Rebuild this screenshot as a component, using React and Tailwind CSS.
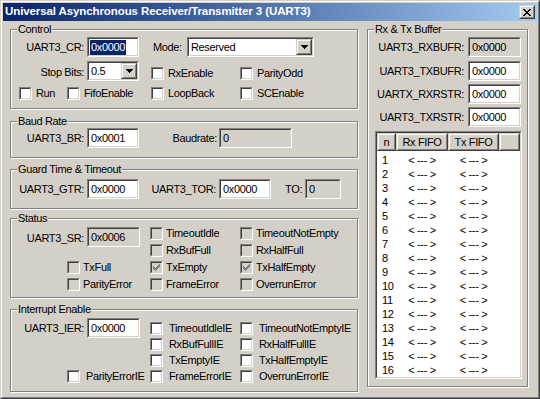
import React from 'react';

// Win2000 style bevels
function Sunken({ className = '', inner = 'bg-white', children }) {
  return (
    <div className={`border border-t-[#808080] border-l-[#808080] border-r-white border-b-white ${className}`}>
      <div className={`w-full h-full border border-t-[#404040] border-l-[#404040] border-r-[#d4d0c8] border-b-[#d4d0c8] overflow-hidden ${inner}`}>
        {children}
      </div>
    </div>
  );
}

function Raised({ className = '', children }) {
  return (
    <div className={`border border-t-[#d4d0c8] border-l-[#d4d0c8] border-r-[#404040] border-b-[#404040] ${className}`}>
      <div className="w-full h-full border border-t-white border-l-white border-r-[#808080] border-b-[#808080] bg-[#d4d0c8] flex items-center justify-center">
        {children}
      </div>
    </div>
  );
}

function Edit({ value, className, readOnly, selected }) {
  return (
    <Sunken className={className} inner={readOnly ? 'bg-[#d4d0c8]' : 'bg-white'}>
      <div className="h-full flex items-center pl-[1px] leading-none">
        {selected ? <span className="bg-[#0a246a] text-white px-[1px] py-[2px]">{value}</span> : <span className="px-[1px]">{value}</span>}
      </div>
    </Sunken>
  );
}

function Arrow() {
  return (
    <svg width="7" height="4" viewBox="0 0 7 4" shapeRendering="crispEdges">
      <rect x="0" y="0" width="7" height="1" fill="#000" />
      <rect x="1" y="1" width="5" height="1" fill="#000" />
      <rect x="2" y="2" width="3" height="1" fill="#000" />
      <rect x="3" y="3" width="1" height="1" fill="#000" />
    </svg>
  );
}

function Combo({ value, className }) {
  return (
    <Sunken className={className}>
      <div className="h-full flex items-center">
        <span className="flex-1 pl-[2px]">{value}</span>
        <Raised className="w-[16px] h-[16px]"><Arrow /></Raised>
      </div>
    </Sunken>
  );
}

function Tick() {
  const rows = [[6, 1], [5, 2], [0, 1, 4, 3], [0, 2, 3, 3], [0, 5], [1, 3], [2, 1]];
  return (
    <svg width="9" height="9" viewBox="0 0 9 9" shapeRendering="crispEdges">
      {rows.map((r, y) => {
        const out = [];
        for (let i = 0; i < r.length; i += 2) {
          out.push(<rect key={i} x={r[i] + 1} y={y + 1} width={r[i + 1]} height="1" fill="#808080" />);
        }
        return out;
      })}
    </svg>
  );
}

function Check({ label, checked, disabled, gap = 'ml-[4px]' }) {
  return (
    <div className="flex items-center h-[13px]">
      <Sunken className="w-[13px] h-[13px] shrink-0" inner={disabled ? 'bg-[#d4d0c8]' : 'bg-white'}>
        {checked && <Tick />}
      </Sunken>
      <span className={`${gap} whitespace-nowrap leading-none`}>{label}</span>
    </div>
  );
}

function Group({ label, className, children }) {
  return (
    <div className={`relative border border-[#808080] shadow-[1px_1px_0_#fff,inset_1px_1px_0_#fff] ${className}`}>
      <span className="absolute -top-[8px] left-[6px] px-[1px] bg-[#d4d0c8] leading-[14px] whitespace-nowrap">{label}</span>
      {children}
    </div>
  );
}

const Lbl = ({ className, children }) => (
  <span className={`text-right whitespace-nowrap shrink-0 ${className}`}>{children}</span>
);

export default function App() {
  const fifo = Array.from({ length: 16 }, (_, i) => i + 1);
  return (
    <div className="w-[540px] h-[399px] font-['Liberation_Sans',Arial,sans-serif] text-[11px] tracking-[-0.35px] text-black select-none">
      <div className="w-full h-full border border-t-[#d4d0c8] border-l-[#d4d0c8] border-r-[#404040] border-b-[#404040]">
        <div className="w-full h-full border border-t-white border-l-white border-r-[#808080] border-b-[#808080] bg-[#d4d0c8] p-[1px] flex flex-col">
          {/* title bar */}
          <div className="h-[18px] bg-linear-to-r from-[#0a246a] to-[#a6caf0] flex items-center justify-between pl-[2px] pr-[2px]">
            <span className="text-white font-bold text-[11.5px] tracking-[-0.1px] whitespace-nowrap">Universal Asynchronous Receiver/Transmitter 3 (UART3)</span>
            <Raised className="w-[16px] h-[14px]">
              <svg width="8" height="7" viewBox="0 0 8 7" shapeRendering="crispEdges">
                <path d="M0 0h2v1h-2zM6 0h2v1h-2zM1 1h2v1h-2zM5 1h2v1h-2zM2 2h4v1h-4zM3 3h2v1h-2zM2 4h4v1h-4zM1 5h2v1h-2zM5 5h2v1h-2zM0 6h2v1h-2zM6 6h2v1h-2z" fill="#000" />
              </svg>
            </Raised>
          </div>

          <div className="flex pl-[7px] pt-[8px]">
            {/* left column */}
            <div className="flex flex-col w-[348px]">
              <Group label="Control" className="h-[80px]">
                <div className="flex flex-col pt-[7px]">
                  <div className="flex items-center h-[20px]">
                    <Lbl className="w-[73px]">UART3_CR:</Lbl>
                    <Edit className="ml-[3px] w-[52px] h-[20px]" value="0x0000" selected />
                    <span className="ml-[14px] w-[34px]">Mode:</span>
                    <Combo className="w-[127px] h-[20px]" value="Reserved" />
                  </div>
                  <div className="flex items-start h-[20px] mt-[4px]">
                    <Lbl className="w-[73px] mt-[3px]">Stop Bits:</Lbl>
                    <Combo className="ml-[3px] w-[52px] h-[20px]" value="0.5" />
                    <div className="ml-[12px] w-[89px] mt-[6px]"><Check label="RxEnable" /></div>
                    <div className="mt-[6px]"><Check label="ParityOdd" /></div>
                  </div>
                  <div className="flex items-center mt-[6px]">
                    <div className="ml-[8px] w-[48px]"><Check label="Run" /></div>
                    <div className="w-[84px]"><Check label="FifoEnable" /></div>
                    <div className="w-[89px]"><Check label="LoopBack" /></div>
                    <Check label="SCEnable" />
                  </div>
                </div>
              </Group>

              <Group label="Baud Rate" className="h-[37px] mt-[12px]">
                <div className="flex items-center h-[20px] mt-[6px]">
                  <Lbl className="w-[73px]">UART3_BR:</Lbl>
                  <Edit className="ml-[3px] w-[52px] h-[20px]" value="0x0001" />
                  <Lbl className="w-[78px]">Baudrate:</Lbl>
                  <Edit className="ml-[2px] w-[73px] h-[20px]" value="0" readOnly />
                </div>
              </Group>

              <Group label="Guard Time & Timeout" className="h-[40px] mt-[11px]">
                <div className="flex items-center h-[20px] mt-[9px]">
                  <Lbl className="w-[73px]">UART3_GTR:</Lbl>
                  <Edit className="ml-[3px] w-[52px] h-[20px]" value="0x0000" />
                  <Lbl className="w-[77px]">UART3_TOR:</Lbl>
                  <Edit className="ml-[3px] w-[52px] h-[20px]" value="0x0000" />
                  <span className="ml-[14px] w-[20px]">TO:</span>
                  <Edit className="w-[36px] h-[20px]" value="0" readOnly />
                </div>
              </Group>

              <Group label="Status" className="h-[80px] mt-[9px]">
                <div className="flex pt-[6px]">
                  <div className="w-[139px] flex flex-col">
                    <div className="h-[34px] flex items-start pt-[2px]">
                      <Lbl className="w-[73px] mt-[3px]">UART3_SR:</Lbl>
                      <Edit className="ml-[3px] w-[53px] h-[20px]" value="0x0006" readOnly />
                    </div>
                    <div className="h-[17px] flex items-center pl-[56px]"><Check label="TxFull" disabled gap="ml-[3px]" /></div>
                    <div className="h-[17px] flex items-center pl-[56px]"><Check label="ParityError" disabled gap="ml-[3px]" /></div>
                  </div>
                  <div className="w-[90px] flex flex-col">
                    {['TimeoutIdle', 'RxBufFull', 'TxEmpty', 'FrameError'].map((l) => (
                      <div key={l} className="h-[17px] flex items-center"><Check label={l} disabled checked={l === 'TxEmpty'} gap="ml-[3px]" /></div>
                    ))}
                  </div>
                  <div className="flex flex-col">
                    {['TimeoutNotEmpty', 'RxHalfFull', 'TxHalfEmpty', 'OverrunError'].map((l) => (
                      <div key={l} className="h-[17px] flex items-center"><Check label={l} disabled checked={l === 'TxHalfEmpty'} gap="ml-[3px]" /></div>
                    ))}
                  </div>
                </div>
              </Group>

              <Group label="Interrupt Enable" className="h-[83px] mt-[11px]">
                <div className="flex pt-[8px]">
                  <div className="w-[139px] flex flex-col">
                    <div className="h-[20px] flex items-center">
                      <Lbl className="w-[73px]">UART3_IER:</Lbl>
                      <Edit className="ml-[3px] w-[53px] h-[20px]" value="0x0000" />
                    </div>
                    <div className="h-[16px] mt-[30px] flex items-center pl-[56px]"><Check label="ParityErrorIE" gap="ml-[6px]" /></div>
                  </div>
                  <div className="w-[90px] flex flex-col pt-[2px]">
                    {['TimeoutIdleIE', 'RxBufFullIE', 'TxEmptyIE', 'FrameErrorIE'].map((l) => (
                      <div key={l} className="h-[16px] flex items-center"><Check label={l} gap="ml-[6px]" /></div>
                    ))}
                  </div>
                  <div className="flex flex-col pt-[2px]">
                    {['TimeoutNotEmptyIE', 'RxHalfFullIE', 'TxHalfEmptyIE', 'OverrunErrorIE'].map((l) => (
                      <div key={l} className="h-[16px] flex items-center"><Check label={l} gap="ml-[6px]" /></div>
                    ))}
                  </div>
                </div>
              </Group>
            </div>

            {/* right column */}
            <Group label="Rx & Tx Buffer" className="ml-[9px] w-[161px] h-[358px]">
              <div className="flex flex-col pt-[7px]">
                {[
                  ['UART3_RXBUFR:', true, 'mt-0'],
                  ['UART3_TXBUFR:', false, 'mt-[4px]'],
                  ['UARTX_RXRSTR:', false, 'mt-[3px]'],
                  ['UART3_TXRSTR:', false, 'mt-[3px]'],
                ].map(([l, ro, mt]) => (
                  <div key={l} className={`flex items-center h-[20px] ${mt}`}>
                    <Lbl className="w-[96px]">{l}</Lbl>
                    <Edit className="ml-[4px] w-[53px] h-[20px]" value="0x0000" readOnly={ro} />
                  </div>
                ))}
                <Sunken className="ml-[7px] mt-[4px] w-[147px] h-[248px]">
                  <div className="flex h-[18px]">
                    <Raised className="w-[19px] h-full"><span>n</span></Raised>
                    <Raised className="w-[52px] h-full"><span>Rx FIFO</span></Raised>
                    <Raised className="w-[51px] h-full"><span>Tx FIFO</span></Raised>
                    <Raised className="flex-1 h-full" />
                  </div>
                  <div className="flex flex-col pt-[2px]">
                    {fifo.map((n) => (
                      <div key={n} className="flex h-[14px] items-center">
                        <span className="w-[19px] pl-[5px]">{n}</span>
                        <span className="w-[52px] text-center">&lt; --- &gt;</span>
                        <span className="w-[51px] text-center">&lt; --- &gt;</span>
                      </div>
                    ))}
                  </div>
                </Sunken>
              </div>
            </Group>
          </div>
        </div>
      </div>
    </div>
  );
}
